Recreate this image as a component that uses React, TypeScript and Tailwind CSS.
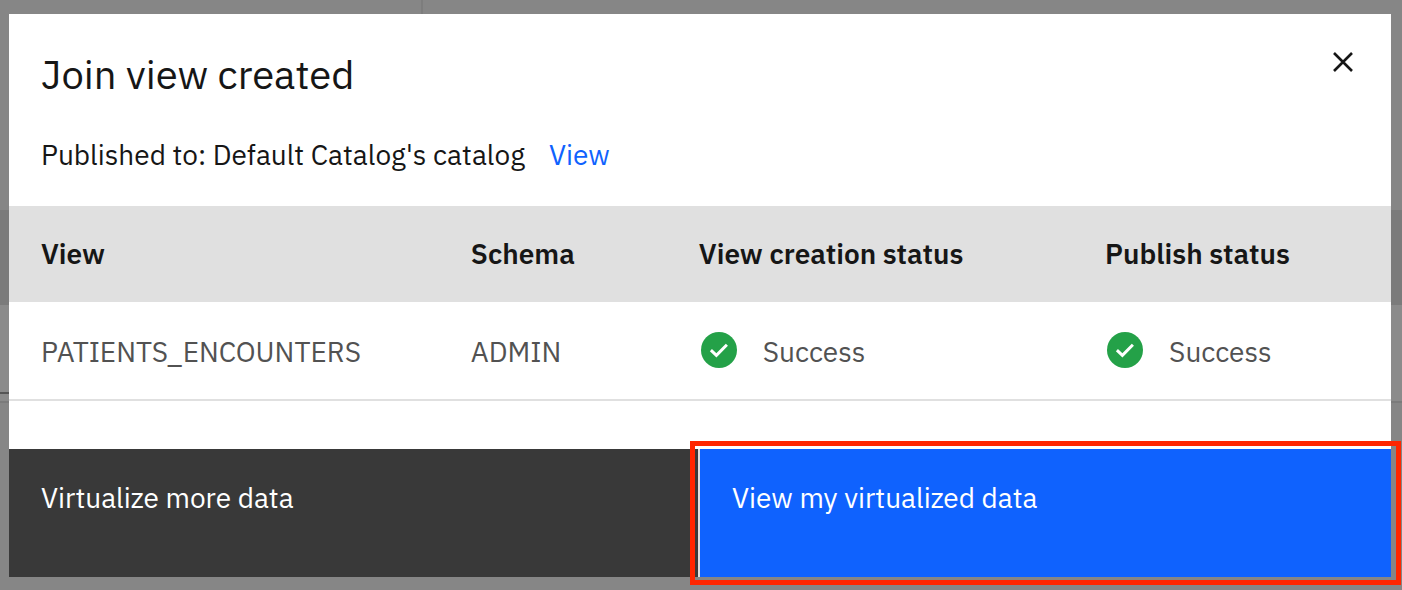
import React from "react";

type Row = { view: string; schema: string; creation: string; publish: string };

const rows: Row[] = [
  { view: "PATIENTS_ENCOUNTERS", schema: "ADMIN", creation: "Success", publish: "Success" },
];

function Status({ label }: { label: string }) {
  return (
    <span className="flex items-center gap-6">
      <svg viewBox="0 0 40 40" className="-mt-1 h-10 w-10 shrink-0" aria-hidden="true">
        <circle cx="20" cy="20" r="18" fill="#24a148" />
        <path d="M11.9 20.1 17.4 25.3 27.9 14.8" fill="none" stroke="#fff" strokeWidth="3" />
      </svg>
      {label}
    </span>
  );
}

function DimmedPage() {
  return (
    <div aria-hidden="true" className="absolute inset-0 flex flex-col bg-[#868686]">
      <div className="flex h-[210px]">
        <div className="w-[423px] border-r-2 border-[#7d7d7d]" />
      </div>
      <div className="h-[95px] bg-[#7b7b7b]" />
      <div className="flex h-[96px] flex-col bg-[#8b8b8b]">
        <div className="mt-[87px] h-[2px] w-1/2 bg-[#555555]" />
      </div>
      <div className="h-[2px] bg-[#7b7b7b]" />
    </div>
  );
}

export default function App() {
  return (
    <div className="relative min-h-screen font-['IBM_Plex_Sans',Roboto,sans-serif] text-[28px] leading-9 text-[#161616]">
      <DimmedPage />
      <div className="relative pt-[14px] pr-[11px] pb-[13px] pl-[9px]">
        <section role="dialog" aria-modal="true" aria-labelledby="dialog-title" className="bg-white">
          <header className="flex h-48 items-start justify-between pl-8">
            <div>
              <h2 id="dialog-title" className="pt-[34px] text-[40px] leading-[52px]">
                Join view created
              </h2>
              <p className="mt-[37px] flex gap-6">
                Published to: Default Catalog's catalog
                <a href="#catalog" className="text-[#0f62fe]">
                  View
                </a>
              </p>
            </div>
            <button type="button" aria-label="Close" className="flex h-24 w-24 items-center justify-center">
              <svg viewBox="0 0 20 20" className="h-5 w-5" fill="none" stroke="#161616" strokeWidth="2.6" aria-hidden="true">
                <path d="M1 1 19 19M19 1 1 19" />
              </svg>
            </button>
          </header>
          <table className="w-full table-fixed border-collapse text-left">
            <colgroup>
              <col className="w-[31.1%]" />
              <col className="w-[16.5%]" />
              <col className="w-[29.4%]" />
              <col />
            </colgroup>
            <thead>
              <tr className="h-24 bg-[#e0e0e0]">
                <th className="px-8 py-0 font-semibold">View</th>
                <th className="px-8 py-0 font-semibold">Schema</th>
                <th className="px-8 py-0 font-semibold">View creation status</th>
                <th className="px-8 py-0 font-semibold">Publish status</th>
              </tr>
            </thead>
            <tbody>
              {rows.map((row) => (
                <tr key={row.view} className="h-[98px] border-b-2 border-[#e0e0e0] text-[#525252]">
                  <td className="px-8 pt-[3px] pb-0">{row.view}</td>
                  <td className="px-8 pt-[3px] pb-0">{row.schema}</td>
                  <td className="px-8 pt-[3px] pb-0">
                    <Status label={row.creation} />
                  </td>
                  <td className="px-8 pt-[3px] pb-0">
                    <Status label={row.publish} />
                  </td>
                </tr>
              ))}
            </tbody>
          </table>
          <footer className="mt-12 grid grid-cols-2 text-white">
            <button type="button" className="flex h-32 items-start bg-[#393939] px-8 pt-[31px] text-left">
              Virtualize more data
            </button>
            <div className="relative">
              <button
                type="button"
                className="flex h-32 w-full items-start bg-[#0f62fe] px-8 pt-[31px] text-left shadow-[-2px_0_0_#e0e0e0]"
              >
                View my virtualized data
              </button>
              <div className="pointer-events-none absolute -inset-x-[10px] -inset-y-2 border-5 border-[#ff2600]" />
            </div>
          </footer>
        </section>
      </div>
    </div>
  );
}
